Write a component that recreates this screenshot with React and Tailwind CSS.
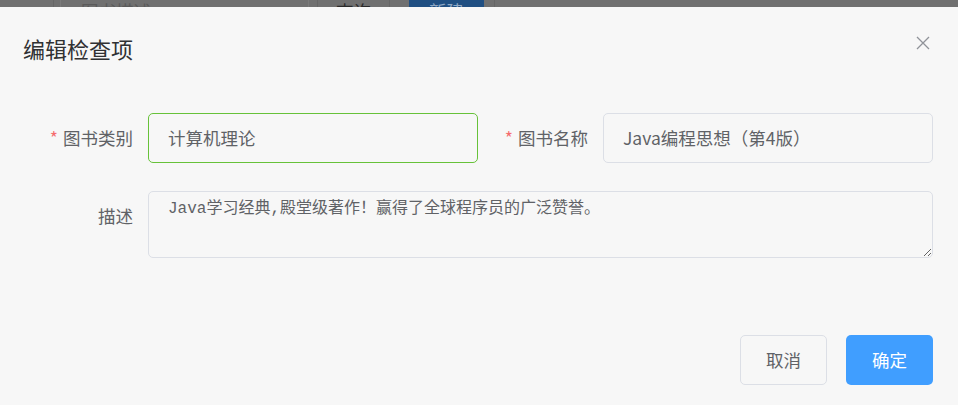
import React from 'react';

const cjk = { fontFamily: '"Noto Sans CJK SC", "Liberation Sans", sans-serif' };

const App = () => {
  return (
    <div className="w-[958px] h-[405px] overflow-hidden bg-[#f7f7f7]" style={cjk}>
      {/* Page behind the overlay */}
      <div className="h-[7px] overflow-hidden bg-[#707070] relative">
        <div className="flex items-end h-[7px] text-[17.5px] leading-none">
          <div className="w-[54px] h-full border-r border-[#666]" />
          <div className="ml-[6px] w-[249px] h-full border-l border-r border-[#7a7a7a] pl-[20px] flex items-end">
            <span className="text-[#5a5a5a] translate-y-[12px]">图书描述</span>
          </div>
          <div className="ml-[8px] w-[73px] h-full border-l border-r border-[#666] pl-[18px] flex items-end">
            <span className="text-[#2a2a2a] translate-y-[12px]">查询</span>
          </div>
          <div className="ml-[19px] w-[75px] h-full bg-[#204f82] flex items-end justify-center">
            <span className="text-[#8fa8c4] translate-y-[12px]">新建</span>
          </div>
          <div className="ml-[10px] h-full border-l border-[#666]" />
        </div>
      </div>

      {/* Dialog */}
      <div className="relative">
        <div className="px-[23px] pt-[27px] flex items-start justify-between">
          <h2 className="text-[22px] leading-[28px] text-[#303133]">编辑检查项</h2>
          <button className="mt-[1px] mr-[4px] text-[#909399]">
            <svg width="16" height="16" viewBox="0 0 16 16" fill="none" stroke="currentColor" strokeWidth="1.3">
              <path d="M2 2 L14 14 M14 2 L2 14" />
            </svg>
          </button>
        </div>

        <div className="mt-[51px]">
          <div className="flex items-center">
            <label className="w-[133px] pr-[15px] text-right text-[17.5px] text-[#606266] leading-[50px] box-content">
              <span className="text-[#f56c6c] mr-[5px]">*</span>图书类别
            </label>
            <div className="w-[330px] h-[50px] rounded-[5px] border border-[#67c23a] flex items-center px-[19px] text-[17.5px] text-[#606266]">
              计算机理论
            </div>
            <label className="w-[110px] pr-[15px] text-right text-[17.5px] text-[#606266] leading-[50px] box-content">
              <span className="text-[#f56c6c] mr-[5px]">*</span>图书名称
            </label>
            <div className="w-[330px] h-[50px] rounded-[5px] border border-[#dcdfe6] flex items-center px-[19px] text-[17.5px] text-[#606266]">
              Java编程思想（第4版）
            </div>
          </div>

          <div className="flex items-start mt-[28px]">
            <label className="w-[133px] pr-[15px] text-right text-[17.5px] text-[#606266] leading-[50px] box-content">
              描述
            </label>
            <textarea
              readOnly
              rows={2}
              className="w-[785px] h-[67px] rounded-[5px] border border-[#dcdfe6] bg-transparent px-[19px] py-[6px] text-[16px] leading-[22px] text-[#606266] outline-none resize-y"
              style={{ fontFamily: '"Liberation Mono", "Noto Sans CJK SC", monospace' }}
              defaultValue="Java学习经典,殿堂级著作！赢得了全球程序员的广泛赞誉。"
            />
          </div>
        </div>

        <div className="flex justify-end gap-[19px] pr-[25px] mt-[77px]">
          <button className="w-[87px] h-[50px] rounded-[5px] border border-[#dcdfe6] text-[17.5px] text-[#606266]">
            取消
          </button>
          <button className="w-[87px] h-[50px] rounded-[5px] bg-[#409eff] text-[17.5px] text-white">
            确定
          </button>
        </div>
      </div>
    </div>
  );
};

export default App;
